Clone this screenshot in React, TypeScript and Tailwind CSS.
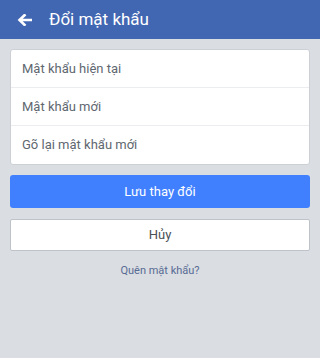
import React from "react";

export default function App() {
  const font = { fontFamily: "Roboto, 'Noto Sans', sans-serif" };
  return (
    <div className="w-[320px] h-[358px] bg-[#dadde1] flex flex-col" style={font}>
      <div className="h-[39px] bg-[#4267b2] flex items-center shrink-0">
        <div className="w-[49px] flex items-center pl-[17px]">
          <svg width="15" height="12" viewBox="0 0 15 12">
            <path d="M14 6H3M7.5 1.2L2.5 6l5 4.8" stroke="white" strokeWidth="2.6" fill="none" strokeLinecap="square" />
          </svg>
        </div>
        <span className="text-white text-[17px] leading-none">Đổi mật khẩu</span>
      </div>
      <div className="px-[10px] pt-[10px] flex flex-col">
        <div className="bg-white rounded-[3px] border border-[#ccd0d5] flex flex-col">
          <div className="h-[38px] flex items-center px-[11px] text-[13px] text-[#606770] border-b border-[#ebedf0]">Mật khẩu hiện tại</div>
          <div className="h-[38px] flex items-center px-[11px] text-[13px] text-[#606770] border-b border-[#ebedf0]">Mật khẩu mới</div>
          <div className="h-[38px] flex items-center px-[11px] text-[13px] text-[#606770]">Gõ lại mật khẩu mới</div>
        </div>
        <div className="mt-[10px] h-[33px] bg-[#4080ff] rounded-[3px] flex items-center justify-center text-white text-[13px]">Lưu thay đổi</div>
        <div className="mt-[11px] h-[32px] bg-white border border-[#bec3c9] rounded-[2px] flex items-center justify-center text-[#4b4f56] text-[13px]">Hủy</div>
        <div className="mt-[12px] text-center text-[11px] text-[#576b95]">Quên mật khẩu?</div>
      </div>
    </div>
  );
}
